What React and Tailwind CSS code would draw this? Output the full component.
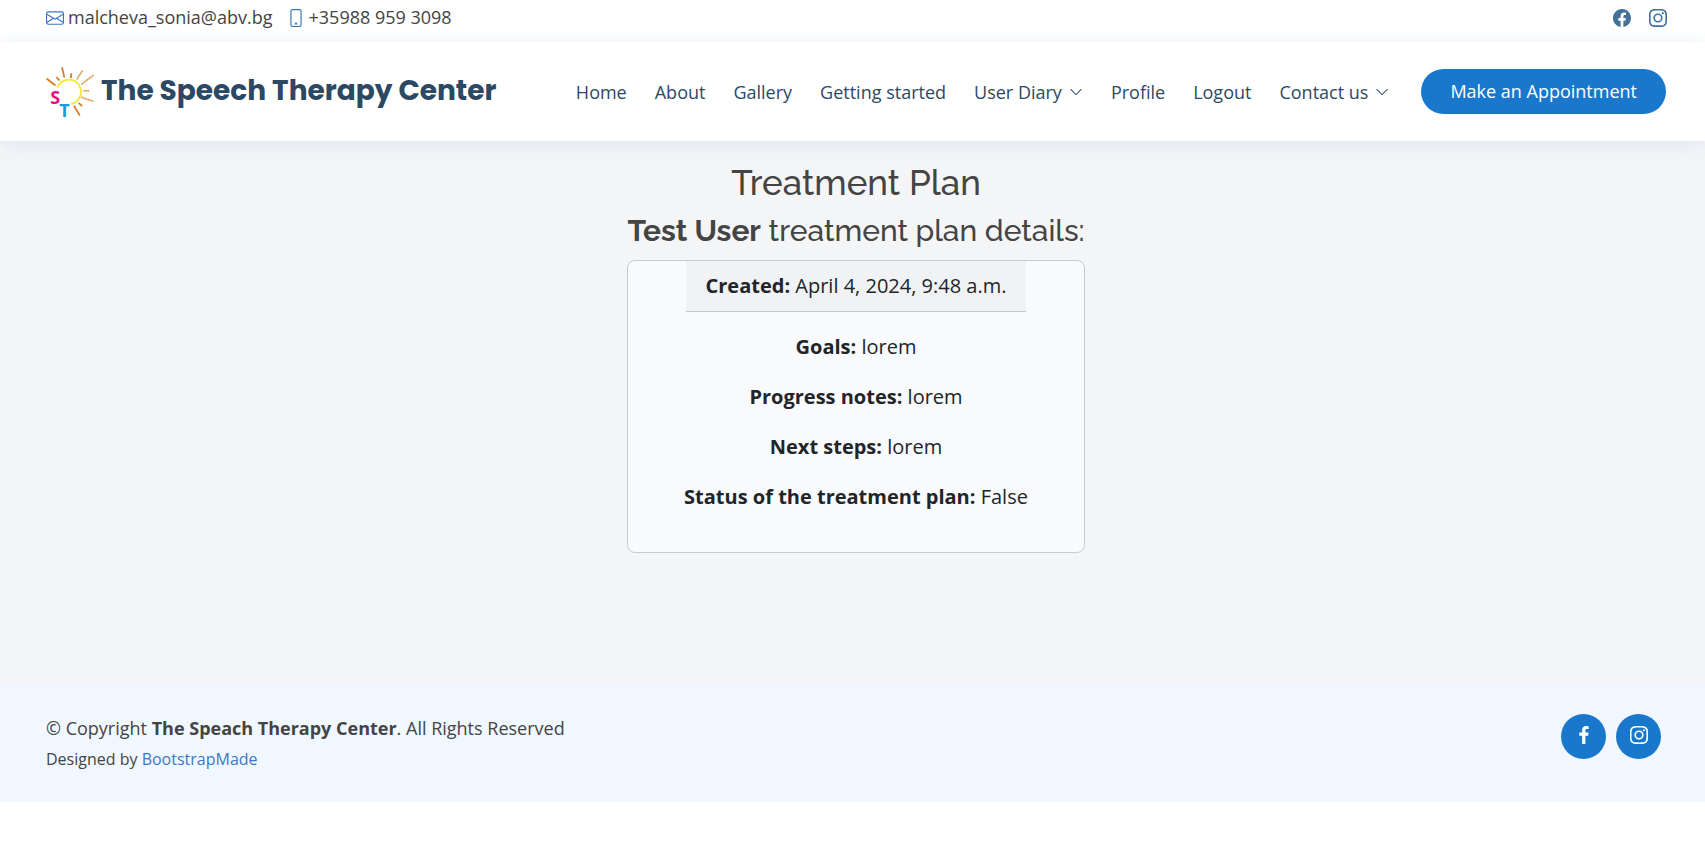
import React from "react";
import { BsEnvelope, BsPhone, BsFacebook, BsInstagram, BsChevronDown } from "react-icons/bs";
import { BiLogoFacebook, BiLogoInstagram } from "react-icons/bi";

const navItems = [
  { label: "Home" },
  { label: "About" },
  { label: "Gallery" },
  { label: "Getting started" },
  { label: "User Diary", menu: true },
  { label: "Profile" },
  { label: "Logout" },
  { label: "Contact us", menu: true },
];

const planRows = [
  { label: "Goals:", value: "lorem" },
  { label: "Progress notes:", value: "lorem" },
  { label: "Next steps:", value: "lorem" },
  { label: "Status of the treatment plan:", value: "False" },
];

function SunLogo() {
  return (
    <svg viewBox="0 0 50 60" className="h-[60px] w-[50px] shrink-0" aria-hidden="true">
      <g transform="translate(0 3)">
        <path d="M12.4 22.5A12.2 12.2 0 1 1 26 38.8" fill="none" stroke="#f3ea26" strokeWidth="1.8" />
        <g stroke="#d97c22" strokeWidth="1.7" fill="none">
          <path d="M1.5 13.5L10.5 20.5" />
          <path d="M11.5 12L14.5 15.5" />
          <path d="M17 2.3L19.4 12.5" />
          <path d="M26.4 8.2L25.8 13.2" />
          <path d="M33.5 37.8L37.2 41.2" />
          <path d="M29 40.8L34.8 50.6" />
        </g>
        <g stroke="#dd9350" strokeWidth="1.6" fill="none" strokeDasharray="1.8 0.4">
          <path d="M37.6 5.5L31.6 14.6" />
          <path d="M48.4 10.2L36.5 19.3" />
          <path d="M38.4 25.8L44.2 25.8" />
          <path d="M36.2 32.3L48.4 36.3" />
        </g>
        <text x="5.3" y="39.2" fontSize="18" fontWeight="700" fill="#e0107f" fontFamily="Open Sans, sans-serif">S</text>
        <text x="14.2" y="52" fontSize="18" fontWeight="700" fill="#1b9cd8" fontFamily="Open Sans, sans-serif">T</text>
      </g>
    </svg>
  );
}

export default function App() {
  return (
    <div className="min-h-screen bg-white font-['Open_Sans',sans-serif] text-[#444444]">
      <div className="flex h-[42px] items-start justify-between pt-1 pr-[38px] pl-[46px] text-[18px] leading-[27px]">
        <div className="flex items-center gap-[14px]">
          <a href="mailto:malcheva_sonia@abv.bg" className="flex items-center gap-1">
            <BsEnvelope className="size-[18px] text-[#3b74c4]" />
            malcheva_sonia@abv.bg
          </a>
          <a href="tel:+359889593098" className="flex items-center gap-1">
            <BsPhone className="size-[18px] text-[#2f74b8]" />
            +35988 959 3098
          </a>
        </div>
        <div className="flex h-[27px] items-center gap-[18px] text-[#437099]">
          <a href="#facebook" aria-label="Facebook"><BsFacebook className="size-[18px]" /></a>
          <a href="#instagram" aria-label="Instagram"><BsInstagram className="size-[18px]" /></a>
        </div>
      </div>

      <header className="relative flex h-[99px] items-center justify-between bg-white pr-[39px] pl-[45px] shadow-[0_2px_19px_rgba(25,100,190,0.11)]">
        <a href="#home" className="flex items-center gap-[6px]">
          <SunLogo />
          <span className="pb-[2px] font-[Poppins,Inter,sans-serif] text-[28px] leading-9 font-bold whitespace-nowrap text-[#2c4964]">
            The Speech Therapy Center
          </span>
        </a>
        <div className="flex items-center">
          <nav className="flex items-center gap-7 text-[18px] leading-6 text-[#2c4964]">
            {navItems.map((item) => (
              <a key={item.label} href="#" className="flex items-center gap-[7px] whitespace-nowrap">
                {item.label}
                {item.menu && <BsChevronDown className="size-[14px]" />}
              </a>
            ))}
          </nav>
          <a
            href="#appointment"
            className="ml-8 flex h-[45px] items-center rounded-full bg-[#1977cc] px-[29px] text-[18px] whitespace-nowrap text-white"
          >
            Make an Appointment
          </a>
        </div>
      </header>

      <main className="flex flex-col items-center bg-[#f4f5f7] pt-5 pb-[131px] pl-[7px]">
        <h1 className="font-[Raleway,Lato,sans-serif] text-[35px] leading-[44px] font-medium">Treatment Plan</h1>
        <h2 className="mt-1 font-[Raleway,Lato,sans-serif] text-[30px] leading-[44px] font-medium whitespace-nowrap">
          <strong>Test User</strong> treatment plan details:
        </h2>
        <section className="mt-[7px] flex w-[458px] flex-col items-center rounded-lg border border-[#c9cbce] bg-[#f9fafc] text-[20px] leading-[30px] text-[#212529]">
          <div className="border-b border-[#c4c6c9] bg-[#f0f2f4] px-5 py-[10px]">
            <strong>Created:</strong> April 4, 2024, 9:48 a.m.
          </div>
          <div className="flex flex-col items-center gap-5 pt-5 pb-10">
            {planRows.map((row) => (
              <p key={row.label}>
                <strong>{row.label}</strong> {row.value}
              </p>
            ))}
          </div>
        </section>
      </main>

      <footer className="flex items-start justify-between bg-[#f1f7fe] py-[30px] pr-11 pl-[46px]">
        <div>
          <p className="text-[18px] leading-7">
            © Copyright <strong>The Speach Therapy Center</strong>. All Rights Reserved
          </p>
          <p className="mt-1 text-[16px] leading-[26px]">
            Designed by <a href="#bootstrapmade" className="text-[#3b78c6]">BootstrapMade</a>
          </p>
        </div>
        <div className="flex gap-[10px]">
          <a href="#facebook" aria-label="Facebook" className="flex size-[45px] items-center justify-center rounded-full bg-[#1977cc] pb-[3px] text-white">
            <BiLogoFacebook className="size-6" />
          </a>
          <a href="#instagram" aria-label="Instagram" className="flex size-[45px] items-center justify-center rounded-full bg-[#1977cc] pb-[3px] text-white">
            <BiLogoInstagram className="size-6" />
          </a>
        </div>
      </footer>
    </div>
  );
}
